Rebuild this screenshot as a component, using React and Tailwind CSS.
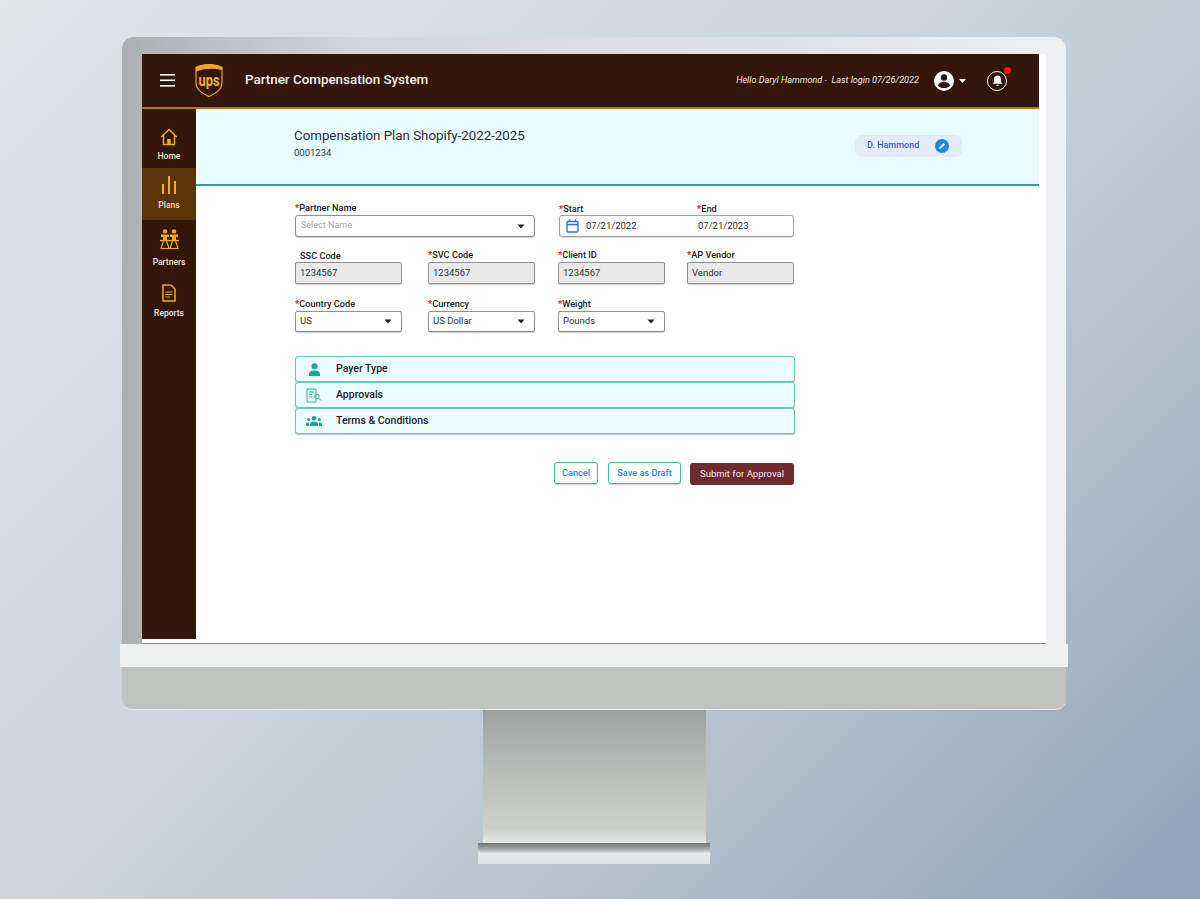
const Caret = ({ className = '' }) => (
  <svg width="8" height="5" viewBox="0 0 8 5" className={className}>
    <path d="M0.5 0.5h7L4 4.5z" fill="#222" />
  </svg>
);

const Label = ({ children, required = true, className = '' }) => (
  <div className={`h-[14px] text-[9.2px] leading-[14px] font-medium text-[#222] whitespace-nowrap ${className}`}>
    {required && <span className="text-[#e01010] font-bold">*</span>}
    {children}
  </div>
);

const Disabled = ({ label, value, required, labelClass }) => (
  <div className="w-[107px]">
    <Label required={required} className={labelClass}>{label}</Label>
    <div className="h-[22px] flex items-center px-[4px] rounded-[2px] border border-[#8f9292] bg-[#e9e9e9] shadow-[0_1px_1px_rgba(0,0,0,0.2)] text-[9.5px] text-[#333]">
      {value}
    </div>
  </div>
);

const Select = ({ label, value }) => (
  <div className="w-[107px]">
    <Label>{label}</Label>
    <div className="h-[21px] flex items-center justify-between pl-[4px] pr-[9px] rounded-[2px] border border-[#8f9292] bg-white shadow-[0_1px_1px_rgba(0,0,0,0.2)] text-[9.5px] text-[#333]">
      {value}
      <Caret />
    </div>
  </div>
);

const UpsLogo = () => (
  <svg width="28" height="33" viewBox="0 0 28 33">
    <path d="M14 0.5C9 0.5 4.5 1.4 1 3.2V18c0 7 4.5 10.5 13 14.5 8.5-4 13-7.5 13-14.5V3.2C23.5 1.4 19 0.5 14 0.5z" fill="#321609" stroke="#f0a818" strokeWidth="1.2" />
    <path d="M27 3.2C23.5 1.4 19 0.5 14 0.5 9 0.5 4.5 1.4 1 3.2v4.6C8 4.2 18 3.8 27 6z" fill="#f0a818" />
    <text x="14" y="22" textAnchor="middle" fontSize="16" fontWeight="700" fill="#f5b01c" fontFamily="Roboto, sans-serif" textLength="21" lengthAdjust="spacingAndGlyphs">ups</text>
  </svg>
);

const NavItem = ({ icon, label, active, className = '' }) => (
  <div className={`flex flex-col items-center ${active ? 'bg-[#5c3409]' : ''} ${className}`}>
    {icon}
    <span className={`text-[8.5px] leading-[12px] font-medium ${active ? 'text-[#f0dcc0]' : 'text-[#eee6df]'}`}>{label}</span>
  </div>
);

const HomeIcon = (
  <svg width="18" height="18" viewBox="0 0 18 18" fill="none" stroke="#f0a818" strokeWidth="1.5">
    <path d="M1.2 9L9 1.5 16.8 9M3.5 7.5V16.5H14.5V7.5" />
    <rect x="7.2" y="11" width="3.6" height="5.5" fill="#f0a818" stroke="none" />
  </svg>
);

const PlansIcon = (
  <svg width="16" height="18" viewBox="0 0 16 18" fill="#f2b01e">
    <rect x="1" y="8" width="2" height="10" />
    <rect x="7" y="0" width="2" height="18" />
    <rect x="13" y="5" width="2" height="13" />
  </svg>
);

const PartnersIcon = (
  <svg width="19" height="21" viewBox="0 0 19 21" fill="none" stroke="#f0a818" strokeWidth="1.2">
    <circle cx="5" cy="2.4" r="2.2" fill="#f0a818" stroke="none" />
    <circle cx="14" cy="2.4" r="2.2" fill="#f0a818" stroke="none" />
    <path d="M1 5.5h8V8H7v3H3V8H1zM10 5.5h8V8h-2v3h-4V8h-2z" fill="#f0a818" stroke="none" />
    <path d="M0 11.5h19" strokeWidth="1.4" />
    <path d="M3.5 12l-2.5 7.5h8L6.500 12M12.500 12L10 19.500h8L15.500 12" />
  </svg>
);

const ReportsIcon = (
  <svg width="14" height="18" viewBox="0 0 14 18" fill="none" stroke="#f0a818" strokeWidth="1.5">
    <path d="M1 1h8l4 4v12H1z" />
    <path d="M3.5 8h7M3.5 10.500h7M3.500 13h4.500" strokeWidth="1.2" />
  </svg>
);

const Row = ({ icon, label, className = 'h-[26px]' }) => (
  <div className={`flex items-center rounded-[3px] border border-[#6cc4bb] bg-[#ebfdfd] shadow-[0_1px_1px_rgba(0,0,0,0.25)] ${className}`}>
    <div className="w-[36px] flex justify-center">{icon}</div>
    <span className="ml-[4px] text-[10.500px] font-medium text-[#222]">{label}</span>
  </div>
);

export default function App() {
  return (
    <div className="w-[1200px] h-[899px] overflow-hidden pt-[37px] pl-[122px] bg-[linear-gradient(135deg,#e1e5e8_0%,#cbd4dc_45%,#bac7d2_65%,#8fa2b6_100%)] font-[Roboto,sans-serif]">
      {/* monitor */}
      <div className="w-[944px] pt-[17px] px-[20px] rounded-t-[12px] bg-[linear-gradient(90deg,#adb0b0_0%,#d4d7d7_25%,#dfe2e2_70%,#eef0f1_100%)]">
        <div className="w-[904px] h-[590px] bg-white flex flex-col border-b border-[#8a8a8a]">
          <div className="w-[897px]">
            <header className="h-[55px] flex items-center justify-between border-b-2 border-[#b5761c] bg-[#321609]">
              <div className="flex items-center">
                <svg width="16" height="13" viewBox="0 0 16 13" fill="#fff" className="ml-[18px]">
                  <rect y="0" width="15" height="1.6" />
                  <rect y="5.500" width="15" height="1.6" />
                  <rect y="11" width="15" height="1.6" />
                </svg>
                <div className="ml-[19px] flex"><UpsLogo /></div>
                <span className="ml-[22px] text-[13.4px] font-medium text-[#f6f0ea]">Partner Compensation System</span>
              </div>
              <div className="flex items-center">
                <span className="text-[9.1px] italic text-[#efe8e2] whitespace-pre">Hello Daryl Hammond -  Last login 07/26/2022</span>
                <svg width="20" height="20" viewBox="0 0 20 20" className="ml-[15px]">
                  <circle cx="10" cy="10" r="10" fill="#fff" />
                  <circle cx="10" cy="6.500" r="3.2" fill="#321609" />
                  <path d="M3.800 14.500c1.200-2.600 3.600-3.700 6.200-3.700s5 1.100 6.200 3.700C14.600 16.400 12.400 17 10 17s-4.600-.6-6.200-2.500z" fill="#321609" />
                </svg>
                <svg width="7" height="4" viewBox="0 0 7 4" className="ml-[5px]"><path d="M0 0h7L3.500 4z" fill="#fff" /></svg>
                <div className="relative ml-[21px] mr-[32px] w-[20px] h-[20px] rounded-full border-[1.5px] border-white flex items-center justify-center">
                  <svg width="11" height="12" viewBox="0 0 12 13" fill="#fff">
                    <path d="M6 0.500c-2.400 0-3.800 1.800-3.800 4v3L.8 9.500h10.400L9.800 7.500v-3c0-2.200-1.400-4-3.800-4zM4.600 10.500h2.800a1.400 1.400 0 0 1-2.800 0z" />
                  </svg>
                  <span className="absolute -top-[5px] -right-[5px] w-[7px] h-[7px] rounded-full bg-[#f01020]" />
                </div>
              </div>
            </header>
            <div className="flex h-[530px]">
              <nav className="w-[54px] shrink-0 bg-[#321609] pt-[19px]">
                <NavItem icon={HomeIcon} label="Home" className="h-[40px] gap-[4px]" />
                <NavItem icon={PlansIcon} label="Plans" active className="h-[52px] pt-[8px] gap-[5px]" />
                <NavItem icon={PartnersIcon} label="Partners" className="h-[56px] pt-[9px] gap-[6px]" />
                <NavItem icon={ReportsIcon} label="Reports" className="pt-[8px] gap-[5px]" />
              </nav>
              <main className="flex-1 min-w-0">
                <div className="h-[77px] flex justify-between border-b-2 border-[#1fa99c] bg-[#e8fdff] pl-[98px] pr-[77px]">
                  <div className="pt-[18px]">
                    <h1 className="text-[13.3px] leading-[18px] text-[#2b2b2b]">Compensation Plan Shopify-2022-2025</h1>
                    <p className="mt-[2px] text-[9.500px] leading-[12px] text-[#333]">0001234</p>
                  </div>
                  <div className="mt-[26px] h-[22px] w-[107px] flex items-center justify-between pl-[12px] pr-[13px] rounded-[7px] bg-[#e3edfa]">
                    <span className="text-[9px] font-medium text-[#3b5bdb]">D. Hammond</span>
                    <span className="w-[14px] h-[14px] rounded-full bg-[#1e88e5] flex items-center justify-center">
                      <svg width="8" height="8" viewBox="0 0 8 8"><path d="M1 7l.4-1.800L5.600 1 7 2.400 2.800 6.600z" fill="#fff" /></svg>
                    </span>
                  </div>
                </div>

                <div className="pl-[99px] pt-[15px]">
                  <div className="grid grid-cols-[133px_130px_129px_107px]">
                    <div className="col-span-2 w-[240px]">
                      <Label>Partner Name</Label>
                      <div className="h-[22px] flex items-center justify-between pl-[5px] pr-[9px] rounded-[3px] border border-[#8f9292] bg-white shadow-[0_1px_1px_rgba(0,0,0,0.2)] text-[9px] text-[#a8a8a8]">
                        Select Name
                        <Caret />
                      </div>
                    </div>
                    <div className="col-span-2 w-[235px] ml-[1px]">
                      <div className="flex">
                        <Label className="w-[138px] pt-[1px]">Start</Label>
                        <Label className="pt-[1px]">End</Label>
                      </div>
                      <div className="h-[22px] flex items-center pl-[6px] rounded-[3px] border border-[#a0a3a3] bg-white shadow-[0_1px_1px_rgba(0,0,0,0.15)] text-[9.500px] text-[#333]">
                        <svg width="13" height="14" viewBox="0 0 13 14" fill="none" stroke="#2f6fe0" strokeWidth="1.4">
                          <rect x="1" y="2.500" width="11" height="10.500" rx="1" />
                          <path d="M1 5.500h11M3.500 0.500v2.500M9.500 0.500v2.500" />
                        </svg>
                        <span className="ml-[7px] w-[112px]">07/21/2022</span>
                        <span>07/21/2023</span>
                      </div>
                    </div>
                  </div>

                  <div className="mt-[11px] grid grid-cols-[133px_130px_129px_107px]">
                    <Disabled label="SSC Code" value="1234567" required={false} labelClass="pl-[5px] pt-[1px]" />
                    <Disabled label="SVC Code" value="1234567" />
                    <Disabled label="Client ID" value="1234567" />
                    <Disabled label="AP Vendor" value="Vendor" />
                  </div>

                  <div className="mt-[13px] grid grid-cols-[133px_130px_129px_107px]">
                    <Select label="Country Code" value="US" />
                    <Select label="Currency" value="US Dollar" />
                    <Select label="Weight" value="Pounds" />
                  </div>

                  <div className="mt-[24px] w-[500px] flex flex-col">
                    <Row
                      label="Payer Type"
                      className="h-[26px]"
                      icon={
                        <svg width="13" height="13" viewBox="0 0 13 13" fill="#12a89a">
                          <circle cx="6.500" cy="3.200" r="3" />
                          <path d="M1 13v-2c0-2.600 3-3.600 5.500-3.600S12 8.400 12 11v2z" />
                        </svg>
                      }
                    />
                    <Row
                      label="Approvals"
                      icon={
                        <svg width="16" height="15" viewBox="0 0 16 15" fill="none" stroke="#2fb5a8" strokeWidth="1">
                          <path d="M1 1h9v13H1z" />
                          <path d="M3 4h5M3 6.500h3M3 9h3" />
                          <circle cx="11" cy="8.500" r="2.400" />
                          <path d="M12.800 10.300L15 12.500" />
                        </svg>
                      }
                    />
                    <Row
                      label="Terms & Conditions"
                      icon={
                        <svg width="16" height="10" viewBox="0 0 16 10" fill="#12a89a">
                          <circle cx="8" cy="2.200" r="2.200" />
                          <circle cx="2.600" cy="3.400" r="1.500" />
                          <circle cx="13.400" cy="3.400" r="1.500" />
                          <path d="M4 10V8c0-1.800 2-2.600 4-2.600s4 .8 4 2.600v2zM0 10V8.400C0 7 1.300 6.200 2.800 6.200L3 10zM16 10V8.400C16 7 14.700 6.200 13.200 6.200L13 10z" />
                        </svg>
                      }
                    />
                  </div>

                  <div className="mt-[28px] w-[499px] flex justify-end items-start text-[9.2px] font-medium">
                    <button className="h-[22px] w-[44px] rounded-[3px] border border-[#4fb3a8] bg-white text-[#2f80e0] shadow-[0_1px_1px_rgba(0,0,0,0.2)]">Cancel</button>
                    <button className="ml-[10px] h-[22px] w-[73px] rounded-[3px] border border-[#4fb3a8] bg-white text-[#2f80e0] shadow-[0_1px_1px_rgba(0,0,0,0.2)]">Save as Draft</button>
                    <button className="ml-[9px] mt-[1px] h-[22px] w-[104px] rounded-[3px] bg-[#6f2a30] text-[9.5px] text-[#f2e6e6] font-normal">Submit for Approval</button>
                  </div>
                </div>
              </main>
            </div>
          </div>
        </div>
        <div className="h-[23px] -mx-[22px] bg-[#eff1f1]" />
      </div>
      <div className="w-[944px] h-[43px] rounded-b-[10px] border-b border-[#e8ecec] bg-[#bfc4c0]" />
      {/* stand */}
      <div className="ml-[361px] w-[223px] h-[133px] bg-[linear-gradient(180deg,#9da1a0_0%,#b9bdba_45%,#cccfca_90%,#e6e8e6_100%)]" />
      <div className="ml-[356px] w-[232px] h-[21px] bg-[linear-gradient(180deg,#6f7372_0%,#a8acaa_30%,#e6e9e9_50%,#dfe2e2_100%)]" />
    </div>
  );
}
